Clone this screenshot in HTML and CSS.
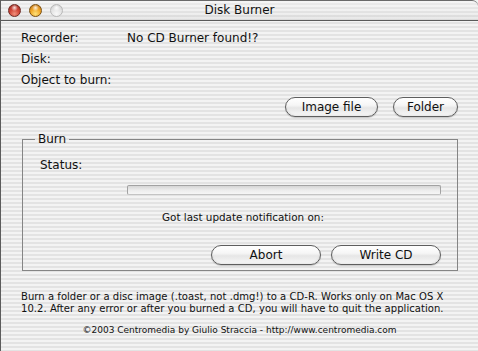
FILE: index.html
```html
<!DOCTYPE html>
<html>
<head>
<meta charset="utf-8">
<title>Disk Burner</title>
<link rel="stylesheet" href="styles.css">
</head>
<body>
<div class="window">
  <div class="titlebar">
    <div class="lights">
      <span class="light red"></span>
      <span class="light yellow"></span>
      <span class="light off"></span>
    </div>
    <div class="title">Disk Burner</div>
    <div class="spacer"></div>
  </div>
  <div class="content">
    <div class="fields">
      <div class="field"><span class="label">Recorder:</span><span class="value">No CD Burner found!?</span></div>
      <div class="field"><span class="label">Disk:</span><span class="value"></span></div>
      <div class="field"><span class="label">Object to burn:</span><span class="value"></span></div>
    </div>
    <div class="actions source-actions">
      <button class="btn btn-image">Image file</button>
      <button class="btn btn-folder">Folder</button>
    </div>
    <fieldset class="group">
      <legend>Burn</legend>
      <div class="status">Status:</div>
      <div class="progress"></div>
      <div class="update">Got last update notification on:</div>
      <div class="actions burn-actions">
        <button class="btn btn-wide">Abort</button>
        <button class="btn btn-wide">Write CD</button>
      </div>
    </fieldset>
    <p class="note">Burn a folder or a disc image (.toast, not .dmg!) to a CD-R. Works only on Mac OS X 10.2. After any error or after you burned a CD, you will have to quit the application.</p>
    <p class="copyright">©2003 Centromedia by Giulio Straccia - http://www.centromedia.com</p>
  </div>
</div>
</body>
</html>
```
FILE: styles.css
```css
html, body {
  margin: 0;
  padding: 0;
}
body {
  width: 478px;
  height: 351px;
  overflow: hidden;
  font-family: "DejaVu Sans", "Liberation Sans", sans-serif;
  font-size: 12px;
  color: #111;
}
.window {
  width: 478px;
  height: 351px;
  box-sizing: border-box;
  border-left: 1px solid #5c5c5c;
  background: repeating-linear-gradient(to bottom, #f3f3f3 0px, #f3f3f3 2px, #e3e3e3 2px, #e3e3e3 4px);
}
.titlebar {
  height: 21px;
  box-sizing: border-box;
  border-top: 1px solid #6a6a6a;
  border-bottom: 1px solid #5a5a5a;
  border-top-right-radius: 6px;
  display: grid;
  grid-template-columns: 1fr auto 1fr;
  align-items: center;
  background:
    linear-gradient(to bottom, rgba(255,255,255,0.35), rgba(255,255,255,0) 60%, rgba(0,0,0,0.04)),
    repeating-linear-gradient(to bottom, #f0f0f0 0px, #f0f0f0 2px, #e2e2e2 2px, #e2e2e2 4px);
}
.lights {
  display: flex;
  gap: 8px;
  padding-left: 7px;
  align-items: center;
}
.light {
  width: 13px;
  height: 13px;
  border-radius: 50%;
  box-sizing: border-box;
}
.light.red {
  border: 1px solid #6e2a24;
  background:
    radial-gradient(circle at 50% 25%, rgba(255,255,255,0.85) 0, rgba(255,255,255,0) 35%),
    radial-gradient(circle at 50% 80%, #f0907c 0, #d2483a 45%, #97231b 100%);
}
.light.yellow {
  border: 1px solid #7a5011;
  background:
    radial-gradient(circle at 50% 25%, rgba(255,255,255,0.85) 0, rgba(255,255,255,0) 35%),
    radial-gradient(circle at 50% 80%, #fde27a 0, #f0a526 50%, #b56810 100%);
}
.light.off {
  border: 1px solid #b8b8b8;
  background:
    radial-gradient(circle at 50% 25%, rgba(255,255,255,0.9) 0, rgba(255,255,255,0) 35%),
    radial-gradient(circle at 50% 80%, #f8f8f8 0, #e2e2e2 55%, #c9c9c9 100%);
}
.title {
  font-size: 12px;
  color: #111;
  line-height: 19px;
}
.content {
  padding: 7px 20px 0 20px;
}
.fields {
  display: flex;
  flex-direction: column;
}
.field {
  display: grid;
  grid-template-columns: 106px 1fr;
  height: 21px;
  line-height: 21px;
}
.actions {
  display: flex;
  justify-content: flex-end;
}
.source-actions {
  margin-top: 6px;
  gap: 15px;
}
.btn {
  font-family: "DejaVu Sans", "Liberation Sans", sans-serif;
  font-size: 12px;
  color: #111;
  height: 20px;
  padding: 0;
  border: 1px solid #5e5e5e;
  border-radius: 10px;
  background: linear-gradient(to bottom, #ffffff 0%, #f6f6f6 40%, #e6e6e6 55%, #f2f2f2 85%, #fbfbfb 100%);
  box-shadow: 0 1px 1px rgba(0,0,0,0.18), inset 0 -1px 2px rgba(0,0,0,0.08);
  line-height: 18px;
}
.btn-image { width: 93px; }
.btn-folder { width: 65px; }
.btn-wide { width: 110px; }
.group {
  margin: 15px 0 0 1px;
  padding: 0 16px 5px 17px;
  border: 1px solid #858585;
  min-width: 0;
}
.group legend {
  margin-left: -5px;
  padding: 0 3px;
  font-size: 12px;
  line-height: 14px;
}
.status {
  margin-top: 11px;
  height: 16px;
  line-height: 16px;
}
.progress {
  margin: 12px 0 0 87px;
  height: 10px;
  box-sizing: border-box;
  border: 1px solid #a2a2a2;
  border-bottom-color: #c4c4c4;
  border-radius: 2px;
  background: linear-gradient(to bottom, #d6d6d6, #ececec 50%, #f6f6f6);
}
.update {
  margin: 15px 0 0 122px;
  height: 15px;
  line-height: 15px;
  font-size: 10.4px;
}
.burn-actions {
  margin-top: 20px;
  gap: 10px;
}
.note {
  margin: 20px 0 0 0;
  font-size: 10px;
  letter-spacing: 0.05px;
  line-height: 12px;
}
.copyright {
  margin: 9px 0 0 0;
  font-size: 9px;
  line-height: 12px;
  text-align: center;
}
```
